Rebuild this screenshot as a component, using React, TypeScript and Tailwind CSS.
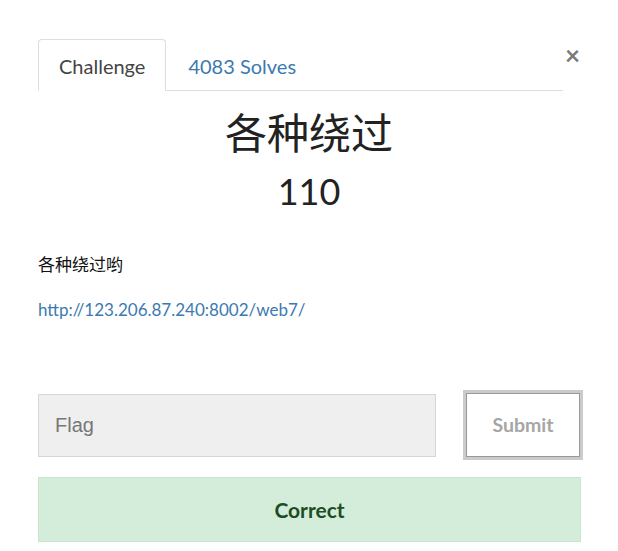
import { useState } from "react";

export default function App() {
  const [flag, setFlag] = useState("");

  return (
    <div className="min-h-screen bg-white font-['Lato','Noto_Sans_CJK_SC',sans-serif] text-[#333]">
      <div className="px-[38px] pt-[39px]">
        <div className="flex items-start">
          <nav className="flex flex-1 border-b border-[#ddd]">
            <div className="-mb-px rounded-t-[4px] border border-[#ddd] border-b-white bg-white px-[20px] pt-[13px] pb-[11px] text-[20px] leading-[26px] text-[#444]">
              Challenge
            </div>
            <div className="px-[22px] pt-[14px] pb-[11px] text-[20px] leading-[26px] text-[#3b7ab0]">4083 Solves</div>
          </nav>
          <button className="ml-[2px] mt-[4px] w-[15px] text-[26px] font-bold leading-[24px] text-[#7a7a7a]">×</button>
        </div>

        <h1 className="mt-[16px] text-center font-['Noto_Sans_CJK_SC',sans-serif] text-[42px] leading-[48px] text-[#222]">
          各种绕过
        </h1>
        <h2 className="mt-[14px] text-center text-[36px] leading-[44px] text-[#222]">110</h2>

        <p className="mt-[39px] font-['Noto_Sans_CJK_SC',sans-serif] text-[17px] leading-[24px] text-[#111]">各种绕过哟</p>
        <p className="mt-[22px] text-[17px] leading-[24px]">
          <a href="#" className="text-[#3b7ab0]">http://123.206.87.240:8002/web7/</a>
        </p>

        <div className="mt-[71px] flex items-center">
          <input
            value={flag}
            onChange={(e) => setFlag(e.target.value)}
            placeholder="Flag"
            className="h-[63px] w-[398px] border border-[#d6d6d6] bg-[#efefef] px-[16px] font-['Liberation_Sans',sans-serif] text-[20px] text-[#555] placeholder:text-[#777] outline-none"
          />
          <button className="ml-[30px] h-[64px] w-[114px] border border-[#999] bg-white text-[19.5px] font-bold text-[#a6a6a6] ring-[3px] ring-[#cbcbcb]">
            Submit
          </button>
        </div>

        <div className="mt-[20px] flex h-[65px] w-[543px] items-center justify-center border border-[#c8e6cc] bg-[#d4edda] text-[21px] font-bold text-[#1d4d23]">
          Correct
        </div>
      </div>
    </div>
  );
}
